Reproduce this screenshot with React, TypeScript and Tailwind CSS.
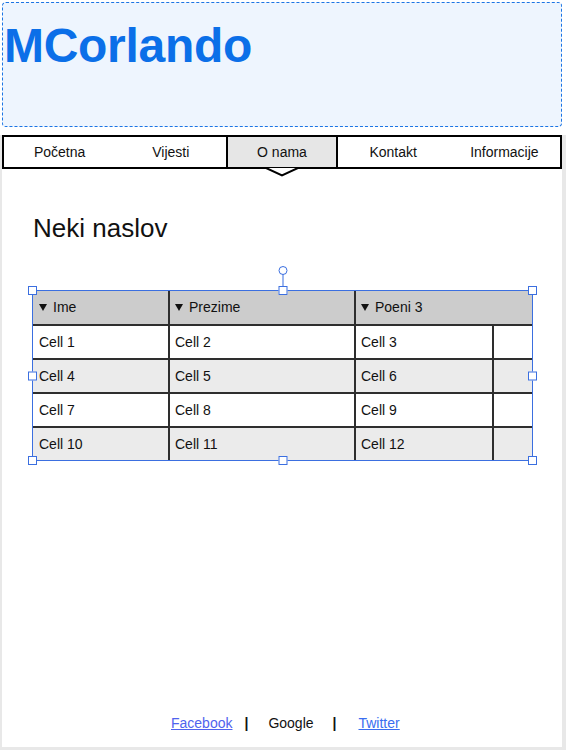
import React from "react";

const Handle = ({ className }: { className: string }) => (
  <div className={`absolute w-[9px] h-[9px] bg-white border border-[#3b6fe0] ${className}`} />
);

const Tri = () => (
  <svg width="8" height="7" viewBox="0 0 8 7" className="mr-[6px] shrink-0">
    <polygon points="0,0 8,0 4,7" fill="#111" />
  </svg>
);

export default function App() {
  const rows = [
    ["Cell 1", "Cell 2", "Cell 3"],
    ["Cell 4", "Cell 5", "Cell 6"],
    ["Cell 7", "Cell 8", "Cell 9"],
    ["Cell 10", "Cell 11", "Cell 12"],
  ];
  const nav = ["Početna", "Vijesti", "O nama", "Kontakt", "Informacije"];
  return (
    <div className="w-[566px] h-[750px] flex flex-col bg-white font-['Liberation_Sans',Arial,sans-serif] text-[#111]">
      <div className="ml-[2px] mr-[4px] mt-[2px] h-[125px] shrink-0 border border-dashed border-[#1b74e4] rounded-[4px] bg-[#eef5fe]">
        <h1 className="text-[48px] font-bold leading-[48px] text-[#0b6fe8] pt-[19px] pl-[1px] tracking-[-0.3px]">MCorlando</h1>
      </div>
      <div className="flex-1 flex flex-col mt-[8px] border-l-2 border-r-4 border-b-[3px] border-[#e8e8e8]">
        <div className="h-[34px] border-2 border-black grid grid-cols-5 shrink-0">
          {nav.map((n, i) =>
            i === 2 ? (
              <div key={n} className="relative flex items-center justify-center bg-[#e6e6e6] border-x-2 border-black text-[14px]">
                {n}
                <svg width="38" height="10" viewBox="0 0 38 10" className="absolute left-1/2 -translate-x-1/2 top-full">
                  <polygon points="1,0 19,8.5 37,0" fill="#fff" stroke="#000" strokeWidth="2" />
                </svg>
              </div>
            ) : (
              <div key={n} className="flex items-center justify-center text-[14px]">
                {n}
              </div>
            )
          )}
        </div>
        <h2 className="text-[26px] leading-[30px] mt-[44px] pl-[31px]">Neki naslov</h2>
        <div className="ml-[30px] mt-[47px] relative w-[501px]">
          <div className="border border-[#3b6fe0] bg-white">
            <div className="flex h-[33px] bg-[#cccccc] text-[14px]">
              <div className="w-[135px] flex items-center pl-[6px]"><Tri />Ime</div>
              <div className="w-[2px] bg-[#2e2e2e]" />
              <div className="w-[184px] flex items-center pl-[5px]"><Tri />Prezime</div>
              <div className="w-[2px] bg-[#2e2e2e]" />
              <div className="w-[176px] flex items-center pl-[5px]"><Tri />Poeni 3</div>
            </div>
            {rows.map((r, i) => (
              <div key={i} className={`flex h-[34px] border-t-2 border-[#2e2e2e] text-[14px] ${i % 2 ? "bg-[#ebebeb]" : "bg-white"}`}>
                <div className="w-[135px] flex items-center pl-[6px]">{r[0]}</div>
                <div className="w-[2px] bg-[#2e2e2e]" />
                <div className="w-[184px] flex items-center pl-[5px]">{r[1]}</div>
                <div className="w-[2px] bg-[#2e2e2e]" />
                <div className="w-[136px] flex items-center pl-[5px]">{r[2]}</div>
                <div className="w-[2px] bg-[#2e2e2e]" />
                <div className="flex-1" />
              </div>
            ))}
          </div>
          <Handle className="-left-[4px] -top-[4px]" />
          <Handle className="left-1/2 -translate-x-1/2 -top-[4px]" />
          <Handle className="-right-[4px] -top-[4px]" />
          <Handle className="-left-[4px] top-1/2 -translate-y-1/2" />
          <Handle className="-right-[4px] top-1/2 -translate-y-1/2" />
          <Handle className="-left-[4px] -bottom-[4px]" />
          <Handle className="left-1/2 -translate-x-1/2 -bottom-[4px]" />
          <Handle className="-right-[4px] -bottom-[4px]" />
          <div className="absolute left-1/2 -translate-x-1/2 -top-[16px] w-[1px] h-[12px] bg-[#3b6fe0]" />
          <div className="absolute left-1/2 -translate-x-1/2 -top-[24px] w-[9px] h-[9px] rounded-full bg-white border border-[#3b6fe0]" />
        </div>
        <div className="mt-auto mb-[16px] flex items-center text-[14px] leading-[16px] pl-[169px]">
          <a href="#" className="text-[#4f63ee] underline">Facebook</a>
          <span className="font-bold ml-[12px]">|</span>
          <span className="ml-[20px]">Google</span>
          <span className="font-bold ml-[19px]">|</span>
          <a href="#" className="ml-[22px] text-[#3a6df0] underline">Twitter</a>
        </div>
      </div>
    </div>
  );
}
